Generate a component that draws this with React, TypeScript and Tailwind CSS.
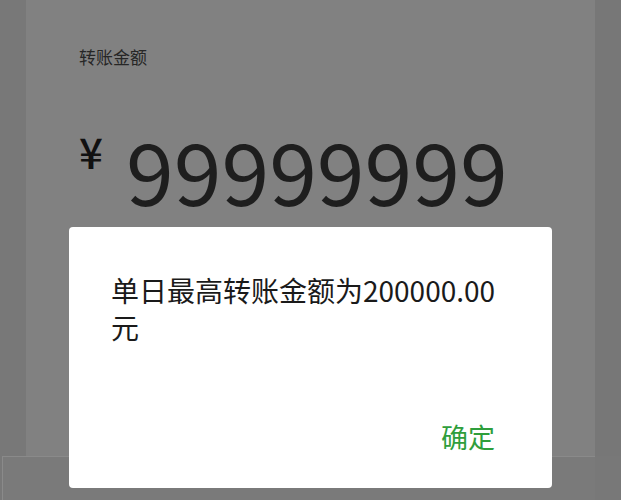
const font = { fontFamily: '"Noto Sans CJK SC", "Noto Sans", sans-serif' };

// Transfer amount page dimmed behind a daily-limit alert.
function AmountCard() {
  return (
    <div className="flex h-[456px] flex-1 flex-col bg-[#818181] pl-[53px] text-[#1e1e1e]">
      <p className="mt-[44px] text-[17px] leading-[26px] text-[#262626]">转账金额</p>
      <div className="mt-[56px] flex items-start">
        <span className="mt-[4px] text-[42px] font-medium leading-[42px] text-[#111]">¥</span>
        <span className="ml-[23px] text-[86px] leading-[86px]">99999999</span>
      </div>
    </div>
  );
}

function LimitDialog() {
  return (
    <div className="absolute left-[69px] top-[227px] flex h-[261px] w-[483px] flex-col rounded-[4px] bg-white pl-[42px] pr-[57px]">
      <p className="mt-[45px] w-[390px] text-[28px] leading-[37px] text-[#1a1a1a]">
        单日最高转账金额为200000.00元
      </p>
      <div className="mt-auto mb-[34px] flex justify-end">
        <button type="button" className="text-[27px] leading-[34px] text-[#2f9e3c]">
          确定
        </button>
      </div>
    </div>
  );
}

export default function App() {
  return (
    <div className="relative h-[500px] w-[621px] overflow-hidden bg-[#787878]" style={font}>
      <div className="flex">
        <div className="w-[26px] bg-[#787878]" />
        <AmountCard />
        <div className="w-[26px] bg-[#777777]" />
      </div>
      <div className="ml-[2px] mr-[26px] h-[44px] border-t border-l border-[#8a8a8a] bg-[#7a7a7a]" />
      <LimitDialog />
    </div>
  );
}
